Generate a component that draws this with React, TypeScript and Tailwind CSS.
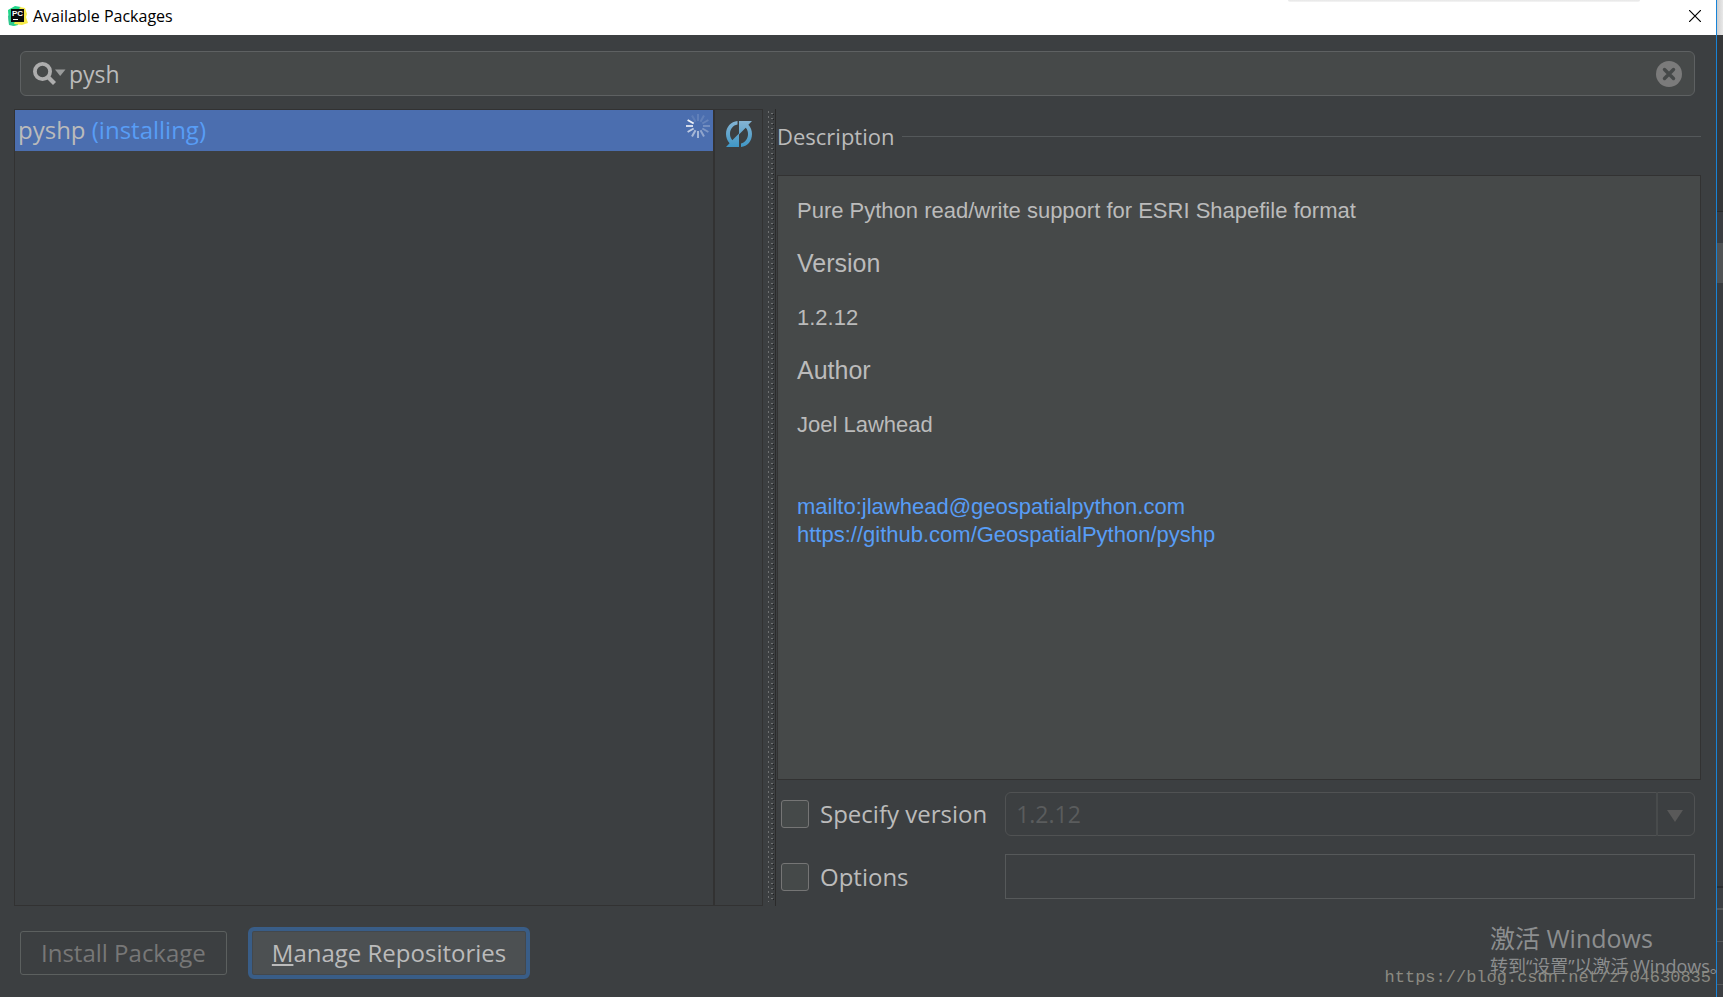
import { useState } from "react";

type PackageItem = {
  name: string;
  status: string;
};

const packages: PackageItem[] = [{ name: "pyshp", status: "(installing)" }];

const spokes = [
  { angle: 0, opacity: 0.12 },
  { angle: 30, opacity: 0.12 },
  { angle: 60, opacity: 0.15 },
  { angle: 90, opacity: 0.22 },
  { angle: 120, opacity: 0.28 },
  { angle: 150, opacity: 0.38 },
  { angle: 180, opacity: 0.5 },
  { angle: 210, opacity: 0.5 },
  { angle: 240, opacity: 0.65 },
  { angle: 270, opacity: 0.75 },
  { angle: 300, opacity: 0.9 },
  { angle: 330, opacity: 0.1 },
];

function PyCharmIcon() {
  return (
    <svg width="20" height="20" viewBox="0 0 20 20" aria-hidden="true">
      <path d="M0 4 7 0l6 1-3 18-4 1-5-2z" fill="#21d789" />
      <path d="m12 1 5 1 2 6-1 3 2 6-6 2-8-1z" fill="#f5ea4a" />
      <path d="M0 10 3 8l3 12-5-1z" fill="#2fc68f" />
      <rect x="3" y="3" width="13" height="13" fill="#0b0b0b" />
      <text x="4" y="10" fontSize="8" fontWeight="700" fill="#fff" fontFamily="Liberation Sans, sans-serif">
        PC
      </text>
      <rect x="5" y="13" width="5" height="1" fill="#fff" />
    </svg>
  );
}

function SearchIcon() {
  return (
    <svg width="33" height="24" viewBox="0 0 33 24" aria-hidden="true">
      <circle cx="9.5" cy="9.5" r="7.6" fill="none" stroke="#adadad" strokeWidth="3.8" />
      <path d="m14.500 14.500 7 7" stroke="#adadad" strokeWidth="4.200" />
      <path d="M22 7.500h10.500L27.200 14z" fill="#999b9b" />
    </svg>
  );
}

function Spinner() {
  return (
    <svg width="24" height="24" viewBox="-12 -12 24 24" aria-hidden="true">
      {spokes.map((spoke) => (
        <path
          key={spoke.angle}
          d="M0-5V-12"
          stroke="#fff"
          strokeWidth="2"
          opacity={spoke.opacity}
          transform={`rotate(${spoke.angle})`}
        />
      ))}
    </svg>
  );
}

function ReloadIcon() {
  return (
    <svg width="26" height="26" viewBox="0 0 26 26" aria-hidden="true">
      <defs>
        <linearGradient id="reload" x1="0" y1="0" x2="0" y2="26" gradientUnits="userSpaceOnUse">
          <stop offset="0" stopColor="#85b4d3" />
          <stop offset="1" stopColor="#3f97c6" />
        </linearGradient>
      </defs>
      <g fill="url(#reload)">
        <path d="M11.5 0v3.6C7 4.400 4 8 4 13c0 2.300.8 4.500 2.300 6.200L13 12.500V26H0l3.600-3.800C1.300 19.700 0 16.500 0 13 0 6 5 .6 11.500 0z" />
        <path d="M15 26v-3.600c4.300-1 7-4.800 7-9.400 0-2.300-.6-4.500-2.300-6.200L13 13.500V0h13l-3.600 3.800C24.700 6.300 26 9.500 26 13c0 7-4.500 12.400-11 13z" />
      </g>
    </svg>
  );
}

function TitleBar() {
  return (
    <header className="relative flex h-[35px] items-center justify-between bg-white pb-[3px] pl-2 pr-[15px] text-black">
      {/* shadow cast by the window above */}
      <div className="absolute right-[76px] top-0 h-0.5 w-[352px] rounded-b-full bg-linear-to-b from-[#e6e6e6] to-[#f5f5f5]" />
      <div className="flex items-center gap-[5px]">
        <PyCharmIcon />
        <h1 className="text-base">Available Packages</h1>
      </div>
      <button type="button" aria-label="Close">
        <svg width="12" height="12" viewBox="0 0 12 12">
          <path d="m0 0 12 12M12 0 0 12" stroke="#000" strokeWidth="1.200" />
        </svg>
      </button>
    </header>
  );
}

function OptionCheckbox({ id, label }: { id: string; label: string }) {
  return (
    <label htmlFor={id} className="flex items-center gap-[11px]">
      <input
        id={id}
        type="checkbox"
        className="size-7 appearance-none rounded-[3px] border border-[#757575] bg-[#454949] checked:bg-[#4b6eaf]"
      />
      {label}
    </label>
  );
}

function PackageDetails() {
  return (
    <article className="flex-1 border border-[#323232] bg-[#464949] px-[19px] pt-[21px] font-['Liberation_Sans',Arial,sans-serif] text-[22px] leading-7">
      <p>Pure Python read/write support for ESRI Shapefile format</p>
      <h2 className="mt-6 text-[25px]">Version</h2>
      <p className="mt-[27px]">1.2.12</p>
      <h2 className="mt-6 text-[25px]">Author</h2>
      <p className="mt-[27px]">Joel Lawhead</p>
      <div className="mt-[54px] flex flex-col items-start text-[#589df6]">
        <a href="mailto:jlawhead@geospatialpython.com">mailto:jlawhead@geospatialpython.com</a>
        <a href="https://github.com/GeospatialPython/pyshp">https://github.com/GeospatialPython/pyshp</a>
      </div>
    </article>
  );
}

// slice of the editor window that shows behind the dialog
function BackgroundWindow() {
  return (
    <div className="flex w-1.5 shrink-0 flex-col bg-[#3c3f43]" aria-hidden="true">
      <div className="h-[35px] bg-linear-to-r from-[#cfcfcf] to-[#e8e8e8]" />
      <div className="h-[177px] border-b border-[#2b2b2b] bg-[#353739]" />
      <div className="h-[31px] bg-[#3a3d41]" />
      <div className="h-10 bg-[#505355]" />
      <div className="flex-1 bg-[#393c3f]" />
      <div className="h-[22px] border-t-2 border-[#2c2e30]" />
      <div className="h-[33px] border-t-2 border-[#555759]" />
      <div className="h-[44px] border-y border-[#55585a]" />
      <div className="h-3" />
    </div>
  );
}

export default function App() {
  const [query, setQuery] = useState("pysh");
  const [options, setOptions] = useState("");

  return (
    <div className="relative flex min-h-screen overflow-hidden bg-[#3c3f41] font-['Open_Sans','Noto_Sans_CJK_SC',sans-serif] text-2xl leading-8 text-[#bbbbbb]">
      <div className="flex min-w-0 flex-1 flex-col border-r border-[#1883d7]">
        <TitleBar />

        <div className="ml-5 mr-[21px] mt-4 flex h-[45px] items-center rounded-md border border-[#5e6162] bg-[#464949] px-3">
          <SearchIcon />
          <input
            type="text"
            aria-label="Search packages"
            value={query}
            onChange={(e) => setQuery(e.target.value)}
            className="min-w-0 flex-1 bg-transparent pl-[3px] text-[23px] outline-none"
          />
          <button type="button" aria-label="Clear" onClick={() => setQuery("")}>
            <svg width="26" height="26" viewBox="0 0 26 26">
              <circle cx="13" cy="13" r="13" fill="#7b7b7b" />
              <path d="m8.500 8.500 9 9M17.500 8.500l-9 9" stroke="#464949" strokeWidth="3.400" strokeLinecap="round" />
            </svg>
          </button>
        </div>

        <main className="mt-[13px] grid flex-1 grid-cols-[minmax(0,701fr)_48px_12px_minmax(0,926fr)] pl-3.5 pr-[15px]">
          <ul className="border border-r-2 border-[#323232]">
            {packages.map((item) => (
              <li key={item.name} className="flex h-[41px] justify-between bg-[#4b6eaf] px-[3px] pt-1">
                <span>
                  {item.name} <span className="text-[#589df6]">{item.status}</span>
                </span>
                <Spinner />
              </li>
            ))}
          </ul>

          <div className="border-y border-r border-[#323232] pl-[11px] pt-[11px]">
            <button type="button" aria-label="Reload list of packages" className="block">
              <ReloadIcon />
            </button>
          </div>

          {/* splitter grip */}
          <div className="flex pb-1 pl-[5px] pt-0.5">
            <div className="w-px bg-[repeating-linear-gradient(#6f7172_0_2px,#3c3f41_2px_5px)]" />
            <div className="ml-0.5 w-0.5 bg-[repeating-linear-gradient(#3c3f41_0_2px,#6f7172_2px_3px,#3c3f41_3px_5px)]" />
            <div className="w-px bg-[repeating-linear-gradient(#3c3f41_0_3px,#1e1f20_3px_4px,#3c3f41_4px_5px)]" />
          </div>

          <section className="flex flex-col border-l border-[#2b2b2b] pl-px">
            <div className="flex h-[66px] items-center gap-2 pb-3">
              <h2 className="text-[22px]">Description</h2>
              <div className="h-px flex-1 bg-[#54585a]" />
            </div>

            <PackageDetails />

            <div className="mt-3 grid grid-cols-[auto_minmax(0,1fr)] items-center gap-x-[18px] gap-y-[18px] pb-[7px] pl-1 pr-1.5">
              <OptionCheckbox id="specify-version" label="Specify version" />
              <div className="relative">
                <select
                  disabled
                  aria-label="Version"
                  className="block h-11 w-full appearance-none rounded-md border border-[#505253] bg-transparent pl-2.5 text-[23px] text-[#5a5c5d] opacity-100"
                >
                  <option>1.2.12</option>
                </select>
                <div className="pointer-events-none absolute inset-y-0 right-0 flex w-[39px] items-center justify-center border-l-2 border-[#484b4c] pr-1 pt-1">
                  <svg width="16" height="12" viewBox="0 0 16 12" aria-hidden="true">
                    <path d="M0 0h16L8 12z" fill="#595959" />
                  </svg>
                </div>
              </div>

              <OptionCheckbox id="options" label="Options" />
              <input
                type="text"
                aria-label="Options"
                value={options}
                onChange={(e) => setOptions(e.target.value)}
                className="h-[45px] border border-[#56595a] bg-transparent px-2.5 outline-none"
              />
            </div>
          </section>
        </main>

        <footer className="flex h-[91px] items-center gap-[21px] px-5 pt-0.5">
          <button
            type="button"
            disabled
            className="h-11 rounded-[3px] border border-[#5c605f] px-5 text-[#777777]"
          >
            Install Package
          </button>
          <button
            type="button"
            className="h-[52px] rounded-md border-4 border-[#395d87] bg-[#4c5052] px-5 shadow-[inset_0_0_0_1px_#43484d]"
          >
            <span className="underline decoration-2 underline-offset-2">M</span>anage Repositories
          </button>
        </footer>
      </div>

      <BackgroundWindow />

      {/* Windows activation notice drawn over the desktop */}
      <div className="pointer-events-none absolute bottom-[19px] right-0 w-[233px] whitespace-nowrap text-[#8c8e8f]">
        <p className="text-[25px]">激活 Windows</p>
        <p className="text-lg leading-6">转到“设置”以激活 Windows。</p>
      </div>
      <p className="pointer-events-none absolute bottom-[7px] right-3 font-['Liberation_Mono',monospace] text-[17px] leading-6 text-[#8b8a82]">
        https://blog.csdn.net/z704630835
      </p>
    </div>
  );
}
